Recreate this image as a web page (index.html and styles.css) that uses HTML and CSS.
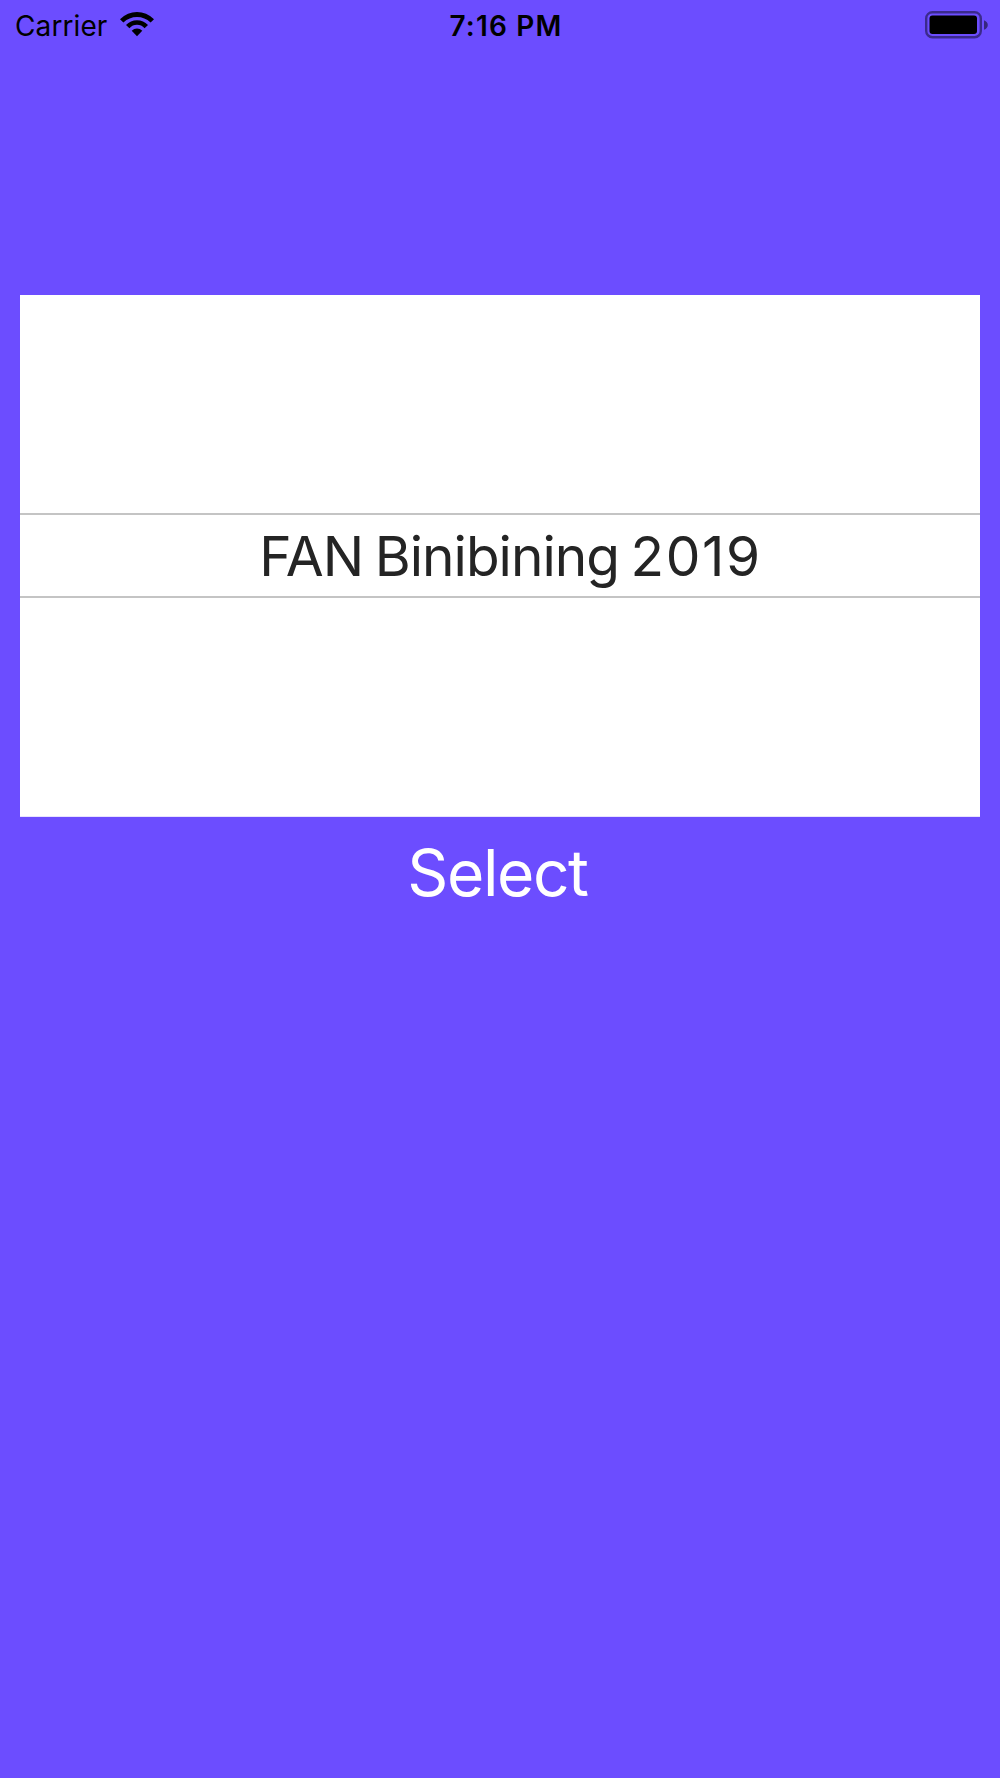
FILE: index.html
```html
<!DOCTYPE html>
<html lang="en">

    <head>
        <meta charset="UTF-8">
        <meta name="viewport" content="width=device-width, initial-scale=1.0">
        <title>Select Event</title>

        <link rel="stylesheet" href="styles.css">
    </head>

    <body>
        <header class="status-bar">
            <div class="network">
                <span class="carrier">Carrier</span>
                <svg class="wifi" width="34" height="25" viewBox="0 0 34 25">
                    <path d="M0 7.2Q7.5 0 17 0T34 7.2L30.6 10.6Q24.8 5.1 17 5.1T3.4 10.6Z" />
                    <path d="M6 13Q10.5 8.2 17 8.2T28 13L24.6 16.2Q21.5 12.8 17 12.8T9.4 16.2Z" />
                    <path d="M11.7 18.8Q14 16.5 17 16.5T22.3 18.8L17 24.3Z" />
                </svg>
            </div>
            <span class="time">7:16 PM</span>
            <svg class="battery" width="63" height="28" viewBox="0 0 63 28">
                <rect class="battery-case" x="1.2" y="1.2" width="54.6" height="25" rx="6.2" />
                <rect x="4.5" y="4.5" width="47.5" height="18.5" rx="3" />
                <path class="battery-cap" d="M59 9.2Q62.8 10.8 62.8 14T59 18.8Z" />
            </svg>
        </header>
        <main>
            <div class="picker">
                <div class="picker-row">FAN Binibining <span class="year">2019</span></div>
            </div>
            <button class="select-btn" type="button">Select</button>
        </main>
    </body>

</html>
```

FILE: styles.css
```css
body {
    margin: 0;
    min-height: 1778px;
    background-color: #6c4dff;
    font-family: Inter, sans-serif;
}

.status-bar {
    display: grid;
    grid-template-columns: 1fr auto 1fr;
    height: 51px;
    padding: 0 12px 0 15px;
    align-items: center;
    font-size: 28px;
    line-height: 34px;
    color: #000;
}

.network {
    display: flex;
    align-items: center;
    gap: 13px;
}

.carrier {
    letter-spacing: 0.1px;
}

.wifi {
    margin-bottom: 2px;
}

.time {
    font-weight: 600;
    letter-spacing: 1.2px;
    margin-left: 9px;
}

.battery {
    justify-self: end;
    margin-bottom: 2px;
}

.battery-case {
    fill: none;
    stroke: #000;
    stroke-width: 2.4;
    opacity: 0.45;
}

.battery-cap {
    opacity: 0.5;
}

main {
    padding: 244px 20px 0;
}

.picker {
    display: flex;
    flex-direction: column;
    justify-content: center;
    height: 521px;
    border-bottom: 1px solid #e8e3ff;
    background-color: #fff;
}

.picker-row {
    height: 81px;
    padding-left: 21px;
    border-top: 2px solid #c4c4c4;
    border-bottom: 2px solid #c4c4c4;
    color: #242424;
    font-size: 55px;
    line-height: 82px;
    letter-spacing: -0.98px;
    word-spacing: -3px;
    text-align: center;
}

.year {
    letter-spacing: 1.6px;
}

.select-btn {
    display: block;
    margin: 14px auto 0;
    padding: 0 5px 0 0;
    border: none;
    background: none;
    color: #fff;
    font-family: inherit;
    font-size: 64px;
    line-height: 84px;
    letter-spacing: -1.4px;
    cursor: pointer;
}
```
